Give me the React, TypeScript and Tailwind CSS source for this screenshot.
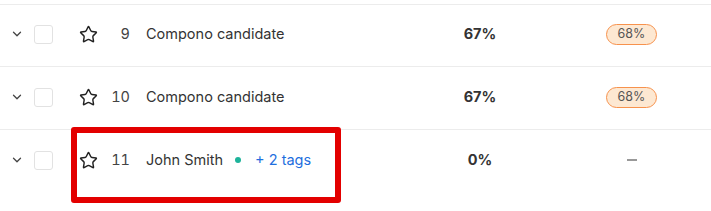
import React from 'react';
import { ChevronDown, Star } from 'lucide-react';

interface Row {
  id: number;
  name: string;
  score: string;
  match: string | null;
  tags?: number;
}

const rows: Row[] = [
  { id: 9, name: 'Compono candidate', score: '67%', match: '68%' },
  { id: 10, name: 'Compono candidate', score: '67%', match: '68%' },
  { id: 11, name: 'John Smith', score: '0%', match: null, tags: 2 },
];

const CandidateRow: React.FC<{ row: Row; first?: boolean }> = ({ row, first }) => (
  <div
    className={`flex items-center ${first ? 'h-[62px] pb-[3px]' : 'h-[63px] pb-[2px]'} border-t border-[#ececec] text-[14.5px] text-[#333]`}
  >
    {/* expand */}
    <div className="w-[34px] flex justify-center">
      <ChevronDown size={14} strokeWidth={2.2} className="text-[#444]" />
    </div>
    {/* select */}
    <div className="w-[19px] h-[19px] border border-[#e2e2e2] rounded-[3px] bg-white" />
    {/* favourite */}
    <div className="w-[51px] flex justify-end pr-[6px]">
      <Star size={19} strokeWidth={1.8} className="text-[#222]" />
    </div>
    <div className="w-[26px] text-right text-[#444] tabular-nums">{row.id}</div>
    <div className="flex items-center ml-[16px] w-[279px]">
      <span>{row.name}</span>
      {row.tags && (
        <>
          <span className="w-[6px] h-[6px] rounded-full bg-[#1db39a] ml-[12px]" />
          <span className="ml-[14px] text-[#1f6fde]">+ {row.tags} tags</span>
        </>
      )}
    </div>
    <div className="w-[110px] text-center font-bold">{row.score}</div>
    <div className="w-[122px] flex justify-end">
      {row.match ? (
        <span className="w-[51px] h-[21px] flex items-center justify-center rounded-full border-[1.5px] border-[#f7924d] bg-[#fde8d2] text-[12.5px] text-[#555]">
          {row.match}
        </span>
      ) : (
        <span className="w-[51px] flex justify-center">
          <span className="w-[10px] h-[2px] bg-[#999]" />
        </span>
      )}
    </div>
  </div>
);

export default function App() {
  return (
    <div className="relative w-[711px] h-[211px] overflow-hidden bg-white" style={{ fontFamily: 'Inter, "Noto Sans", sans-serif' }}>
      <div className="pt-[4px]">
        {rows.map((r, i) => (
          <CandidateRow key={r.id} row={r} first={i === 0} />
        ))}
      </div>
      {/* highlight annotation */}
      <div className="absolute left-[71px] top-[127px] w-[270px] h-[76px] border-[6px] border-[#e30000] rounded-[3px]" />
    </div>
  );
}
